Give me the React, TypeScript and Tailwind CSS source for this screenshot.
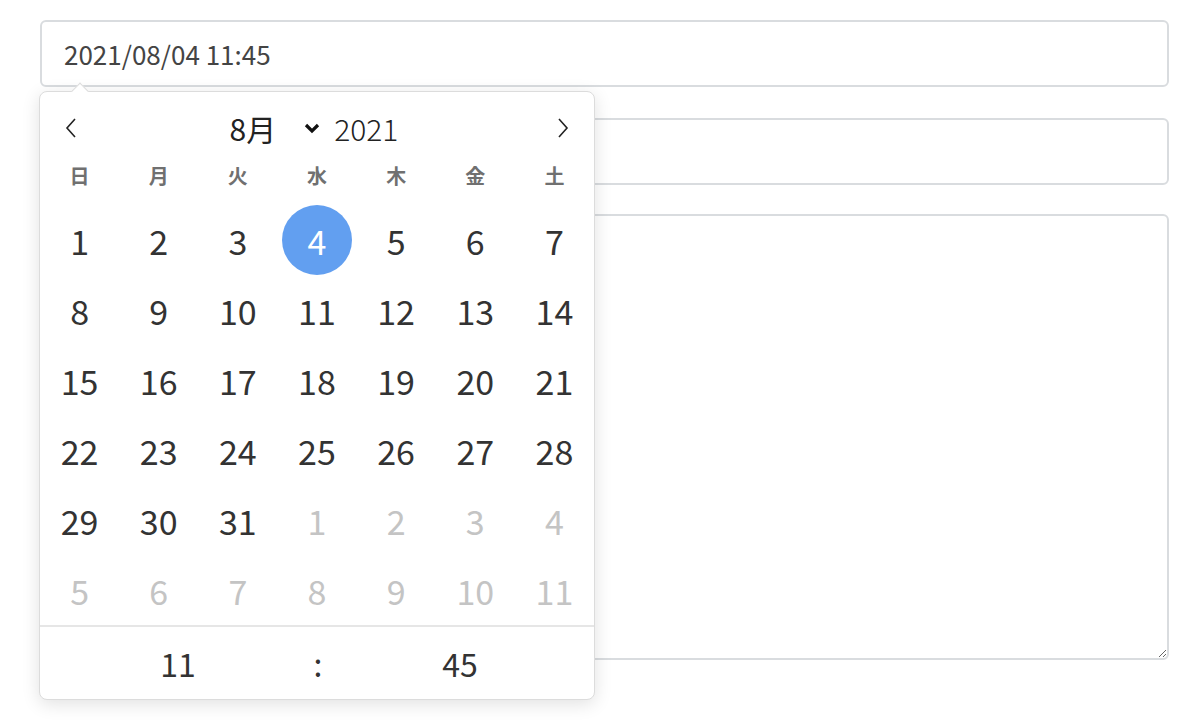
import { useState } from 'react';

const FONT = { fontFamily: '"Noto Sans CJK JP", "Noto Sans", sans-serif' };
const WEEK = ['日', '月', '火', '水', '木', '金', '土'];

type Day = { n: number; muted?: boolean };

function buildDays(): Day[] {
  const days: Day[] = [];
  for (let i = 1; i <= 31; i++) days.push({ n: i });
  for (let i = 1; i <= 11; i++) days.push({ n: i, muted: true });
  return days;
}

function Chevron({ dir }: { dir: 'left' | 'right' }) {
  return (
    <svg width="14" height="24" viewBox="0 0 14 24" fill="none" stroke="#222" strokeWidth="1.6">
      {dir === 'left' ? <path d="M11 3 L3 12 L11 21" /> : <path d="M3 3 L11 12 L3 21" />}
    </svg>
  );
}

function DatePicker() {
  const [selected, setSelected] = useState(4);
  const days = buildDays();

  return (
    <div className="absolute left-[39px] top-[91px] w-[556px] rounded-lg border border-[#dcdcdc] bg-white shadow-[0_4px_18px_rgba(0,0,0,0.12)]">
      <div className="absolute -top-[7px] left-[34px] h-3 w-3 rotate-45 border-l border-t border-[#dcdcdc] bg-white" />
      <div className="flex h-[72px] items-center justify-between px-[24px]">
        <button className="flex h-8 w-8 items-center justify-start">
          <Chevron dir="left" />
        </button>
        <div className="mr-[6px] flex items-center text-[#222]">
          <span className="text-[30px] leading-none">8月</span>
          <svg className="ml-[28px] mr-[14px]" width="16" height="11" viewBox="0 0 16 11" fill="none" stroke="#111" strokeWidth="3.2">
            <path d="M2 2 L8 8 L14 2" />
          </svg>
          <span className="text-[30px] font-light leading-none">2021</span>
        </div>
        <button className="flex h-8 w-8 items-center justify-end">
          <Chevron dir="right" />
        </button>
      </div>
      <div className="grid grid-cols-7 pb-[18px]">
        {WEEK.map((w) => (
          <div key={w} className="text-center text-[20px] font-bold leading-[23px] text-[#707070]">{w}</div>
        ))}
      </div>
      <div className="grid grid-cols-7">
        {days.map((d, i) => (
          <div key={i} className="flex h-[70px] items-center justify-center">
            <button
              onClick={() => !d.muted && setSelected(d.n)}
              className={
                !d.muted && d.n === selected
                  ? 'flex h-[70px] w-[70px] items-center justify-center rounded-full bg-[#629ff0] text-[34px] text-white'
                  : d.muted
                  ? 'text-[34px] text-[#c4c4c4]'
                  : 'text-[34px] text-[#333]'
              }
            >
              {d.n}
            </button>
          </div>
        ))}
      </div>
      <div className="flex h-[74px] items-center border-t-2 border-[#e6e6e6] text-[32px] text-[#333]">
        <div className="ml-[58px] w-[160px] text-center">11</div>
        <div className="ml-[40px] w-[40px] text-center">:</div>
        <div className="ml-[42px] w-[160px] text-center">45</div>
      </div>
    </div>
  );
}

export default function App() {
  return (
    <div className="relative h-[726px] w-[1192px] bg-white" style={FONT}>
      <div className="flex flex-col pl-[40px] pr-[23px] pt-[20px]">
        <input
          readOnly
          value="2021/08/04 11:45"
          className="h-[67px] w-full rounded-md border-2 border-[#d9dcdf] px-[22px] text-[26px] text-[#444] outline-none"
        />
        <input className="mt-[31px] h-[67px] w-full rounded-md border-2 border-[#d9dcdf] px-[22px] text-[26px] outline-none" />
        <textarea className="mt-[29px] h-[446px] w-full rounded-md border-2 border-[#d9dcdf] px-[22px] text-[26px] outline-none" />
      </div>
      <DatePicker />
    </div>
  );
}
